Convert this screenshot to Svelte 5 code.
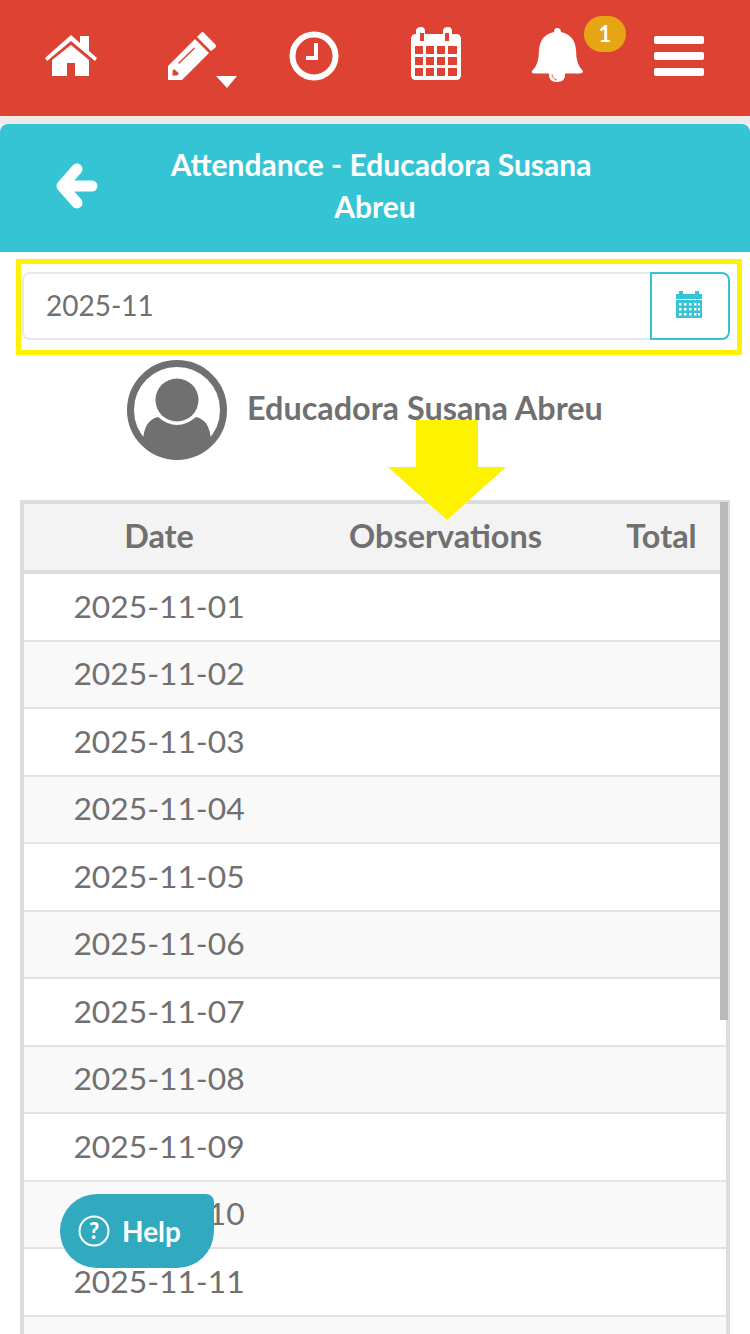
<script>
	const dates = ["01","02","03","04","05","06","07","08","09","10","11","12"].map(d => "2025-11-" + d)
</script>

<div class="page">
	<header class="topbar">
		<a class="nav-item" aria-label="Home">
			<svg viewBox="10 0 122 116"><path d="M71 35 80 43V36H89V51L97 58 95 61 71 41 47 61 45 58ZM71 45 89 60V76H75V63H67V76H52V60Z"/></svg>
		</a>
		<a class="nav-item" aria-label="Records">
			<svg viewBox="132 0 122 116"><path d="M204 33 215 44Q217 46 215 48L211 51 197 37 201 33Q203 31 204 33ZM195 39 209 53 182 80H168V66ZM194 47.500 178 63 179 64 195 48.500ZM174 69 172.500 71V75.500H177L179 73.500Z" fill-rule="evenodd"/><path d="M216 76H237L227 88Z"/></svg>
		</a>
		<a class="nav-item" aria-label="Schedule">
			<svg viewBox="254 0 122 116"><circle cx="314" cy="56" r="21.5" fill="none" stroke="#fff" stroke-width="6"/><path d="M314 43H318V60H306V56H314Z"/></svg>
		</a>
		<a class="nav-item" aria-label="Calendar">
			<svg viewBox="376 0 122 116"><path fill-rule="evenodd" d="M416 34V31Q416 27 421 27 425 27 425 31V34H443V31Q443 27 448 27 452 27 452 31V34H456Q461 34 461 39V75Q461 80 456 80H416Q411 80 411 75V39Q411 34 416 34ZM424 33H420V41H424ZM449 33H445V41H449ZM415 46V54H423V46ZM426 46V54H434V46ZM437 46V54H445V46ZM448 46V54H457V46ZM415 57V65H423V57ZM426 57V65H434V57ZM437 57V65H445V57ZM448 57V65H457V57ZM415 68V76H423V68ZM426 68V76H434V68ZM437 68V76H445V68ZM448 68V76H457V68Z"/></svg>
		</a>
		<a class="nav-item bell" aria-label="Notifications">
			<svg viewBox="498 0 122 116"><path d="M557 28Q561 28 561 32 575 35 576 50 576 65 583 71 583 73 580 73.500H534Q531 73 532 71 539 65 539 50 540 35 554 32 554 28 557 28Z"/><path d="M549 73H565Q566 82 557 82 548 82 549 73Z"/><path d="M552 74Q552 79 557 80" fill="none" stroke="#dd4233" stroke-width="0.800"/></svg>
			<span class="badge">1</span>
		</a>
		<a class="nav-item" aria-label="Menu">
			<span class="burger"><i></i><i></i><i></i></span>
		</a>
	</header>

	<section class="title-bar">
		<a class="back" aria-label="Back">
			<svg viewBox="0 0 44 46" width="44" height="46"><path d="M7 23 22 6M7 23 22 40M7 23H37" fill="none" stroke="#fff" stroke-width="11" stroke-linecap="round" stroke-linejoin="round"/></svg>
		</a>
		<h1>Attendance - Educadora Susana <span>Abreu</span></h1>
	</section>

	<div class="date-frame">
		<div class="date-picker">
			<span class="date-value">2025-11</span>
			<button aria-label="Pick month">
				<svg viewBox="0 0 26 28" width="26" height="28">
					<path d="M0 4H3V1H7V4H19V1H23V4H26V9H0Z" fill="#35c4d4"/>
					<path fill-rule="evenodd" fill="#35c4d4" d="M0 10H26V28H0ZM3 13V15.500H5.500V13ZM8 13V15.500H10.500V13ZM13 13V15.500H15.500V13ZM18 13V15.500H20.500V13ZM22 13V15.500H24V13ZM3 18V20.500H5.500V18ZM8 18V20.500H10.500V18ZM13 18V20.500H15.500V18ZM18 18V20.500H20.500V18ZM22 18V20.500H24V18ZM3 23V25.500H5.500V23ZM8 23V25.500H10.500V23ZM13 23V25.500H15.500V23ZM18 23V25.500H20.500V23ZM22 23V25.500H24V23Z"/>
				</svg>
			</button>
		</div>
	</div>

	<div class="person">
		<svg class="avatar" viewBox="0 0 100 100" width="100" height="100">
			<circle cx="50" cy="50" r="46.500" fill="none" stroke="#707070" stroke-width="7"/>
			<circle cx="50" cy="40" r="21.500" fill="#707070"/>
			<path d="M16 81Q17 60 31 57 50 73 69 57 83 60 84 81A46.500 46.500 0 0 1 16 81Z" fill="#707070"/>
		</svg>
		<span class="person-name">Educadora Susana Abreu</span>
	</div>

	<div class="table-wrap">
		<div class="row head">
			<span>Date</span>
			<span>Observations</span>
			<span>Total</span>
		</div>
		{#each dates as date, i}
			<div class="row" class:odd={i % 2 == 1}>
				<span>{date}</span>
				<span></span>
				<span></span>
			</div>
		{/each}
		<div class="scroll-thumb"></div>
	</div>

	<svg class="big-arrow" viewBox="0 0 118 100" width="118" height="100"><path d="M28 0H90V47H118L59 100 0 47H28Z" fill="#fff200"/></svg>

	<button class="help">
		<svg viewBox="0 0 32 32" width="32" height="32">
			<circle cx="16" cy="16" r="14.500" fill="none" stroke="#fff" stroke-width="2"/>
			<text x="16" y="23.500" text-anchor="middle" class="q">?</text>
		</svg>
		Help
	</button>
</div>

<style>
	:global(body) {
		margin: 0;
		background: #fff;
	}

	.page {
		position: relative;
		width: 750px;
		height: 1334px;
		overflow: hidden;
		font-family: Lato, "Open Sans", sans-serif;
		color: #707070;
	}

	.topbar {
		display: grid;
		grid-template-columns: repeat(6, 122px);
		padding-left: 10px;
		height: 116px;
		background: #dd4233;
		border-bottom: 8px solid #eeeaea;
	}

	.nav-item {
		position: relative;
		display: block;
		height: 116px;
	}

	.nav-item svg {
		display: block;
		width: 122px;
		height: 116px;
		fill: #fff;
	}

	.badge {
		position: absolute;
		left: 86px;
		top: 16px;
		width: 42px;
		height: 36px;
		border-radius: 18px;
		background: #e6a512;
		color: #fff;
		font-size: 22px;
		font-weight: 700;
		line-height: 36px;
		text-align: center;
	}

	.burger {
		display: flex;
		flex-direction: column;
		gap: 8px;
		width: 50px;
		padding: 36px 0 0 34px;
	}

	.burger i {
		display: block;
		height: 8px;
		border-radius: 2px;
		background: #fff;
	}

	.title-bar {
		display: flex;
		align-items: center;
		height: 128px;
		background: #35c4d4;
		border-radius: 8px 8px 0 0;
		padding: 0 0 4px 55px;
		box-sizing: border-box;
	}

	.back {
		display: block;
		width: 44px;
		height: 46px;
	}

	h1 {
		width: 460px;
		margin: 0 0 2px 52px;
		color: #fff;
		font-size: 30px;
		font-weight: 700;
		line-height: 42px;
		text-align: center;
	}

	h1 span {
		padding-right: 12px;
	}

	.date-frame {
		margin: 7px 8px 0 16px;
		height: 96px;
		box-sizing: border-box;
		border: 5px solid #fff200;
		padding: 8px 7px 0 1px;
	}

	.date-picker {
		display: flex;
		height: 68px;
		box-sizing: border-box;
	}

	.date-value {
		flex: 1;
		box-sizing: border-box;
		border: 2px solid #e8e8e8;
		border-right: 0;
		border-radius: 8px 0 0 8px;
		padding-left: 22px;
		font-size: 28px;
		line-height: 62px;
	}

	.date-picker button {
		display: flex;
		align-items: center;
		justify-content: center;
		width: 80px;
		padding: 0 2px 4px 0;
		box-sizing: border-box;
		border: 2px solid #35c4d4;
		border-radius: 0 8px 8px 0;
		background: #fff;
	}

	.person {
		display: flex;
		align-items: center;
		gap: 20px;
		height: 100px;
		padding: 5px 0 0 127px;
		margin-bottom: 40px;
	}

	.avatar {
		display: block;
		flex: none;
	}

	.person-name {
		font-size: 32.400px;
		font-weight: 700;
		white-space: nowrap;
		margin-bottom: 6px;
	}

	.table-wrap {
		position: relative;
		width: 710px;
		margin-left: 20px;
		box-sizing: border-box;
		border: solid #dcdcdc;
		border-width: 4px 4px 0;
	}

	.row {
		display: grid;
		grid-template-columns: 270px 303px 1fr;
		height: 67.5px;
		box-sizing: border-box;
		border-bottom: 2px solid #e2e2e2;
		align-items: center;
		font-size: 31.800px;
		padding-bottom: 2px;
	}

	.row span {
		text-align: center;
	}

	.row.odd {
		background: #f9f9f9;
	}

	.row.head {
		height: 70px;
		background: #f3f3f3;
		border-bottom: 4px solid #dcdcdc;
		font-size: 32.400px;
		font-weight: 700;
		padding-bottom: 4px;
	}

	.scroll-thumb {
		position: absolute;
		right: -2px;
		top: -2px;
		width: 8px;
		height: 518px;
		background: #b9b9b9;
	}

	.big-arrow {
		position: absolute;
		left: 388px;
		top: 420px;
	}

	.help {
		position: absolute;
		left: 60px;
		top: 1194px;
		display: flex;
		align-items: center;
		gap: 12px;
		width: 154px;
		height: 74px;
		padding: 0 0 0 18px;
		border: 0;
		border-radius: 37px 8px 37px 37px;
		background: #31aabf;
		color: #fff;
		font-family: inherit;
		font-size: 28px;
		font-weight: 700;
	}

	.q {
		fill: #fff;
		font-size: 22px;
		font-weight: 900;
		font-family: Lato, sans-serif;
	}
</style>
